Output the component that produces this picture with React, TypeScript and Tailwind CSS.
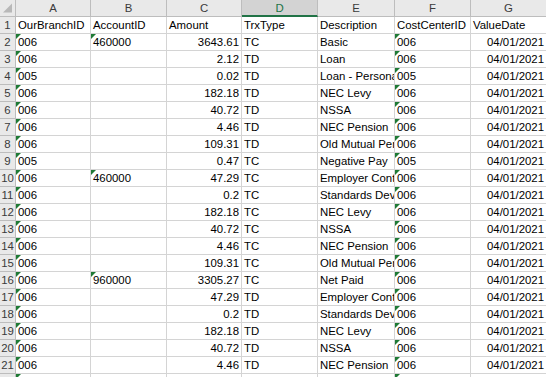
const cols = ["A", "B", "C", "D", "E", "F", "G"];

const header = ["OurBranchID", "AccountID", "Amount", "TrxType", "Description", "CostCenterID", "ValueDate"];

const rows: [string, string, string, string, string, string][] = [
  ["006", "460000", "3643.61", "TC", "Basic", "006"],
  ["006", "", "2.12", "TD", "Loan", "006"],
  ["005", "", "0.02", "TD", "Loan - Personal", "005"],
  ["006", "", "182.18", "TD", "NEC Levy", "006"],
  ["006", "", "40.72", "TD", "NSSA", "006"],
  ["006", "", "4.46", "TD", "NEC Pension", "006"],
  ["006", "", "109.31", "TD", "Old Mutual Pension", "006"],
  ["005", "", "0.47", "TC", "Negative Pay", "005"],
  ["006", "460000", "47.29", "TC", "Employer Contribution", "006"],
  ["006", "", "0.2", "TC", "Standards Development", "006"],
  ["006", "", "182.18", "TC", "NEC Levy", "006"],
  ["006", "", "40.72", "TC", "NSSA", "006"],
  ["006", "", "4.46", "TC", "NEC Pension", "006"],
  ["006", "", "109.31", "TC", "Old Mutual Pension", "006"],
  ["006", "960000", "3305.27", "TC", "Net Paid", "006"],
  ["006", "", "47.29", "TD", "Employer Contribution", "006"],
  ["006", "", "0.2", "TD", "Standards Development", "006"],
  ["006", "", "182.18", "TD", "NEC Levy", "006"],
  ["006", "", "40.72", "TD", "NSSA", "006"],
  ["006", "", "4.46", "TD", "NEC Pension", "006"],
];

const grid = "grid grid-cols-[16px_75px_76px_75px_76px_77px_76px_76px]";
const cell = "relative h-[17px] border-r border-b border-[#d4d4d4] overflow-hidden whitespace-nowrap px-[2px] leading-[16px] text-black";

// green "number stored as text" marker
const Flag = () => (
  <span className="absolute left-0 top-0 w-0 h-0 border-t-[5px] border-r-[5px] border-t-[#1f7a35] border-r-transparent" />
);

const RowHead = ({ n }: { n: number | string }) => (
  <div className="h-[17px] bg-[#e9e9e9] border-r border-b border-[#bdbdbd] text-[#3b3b3b] leading-[16px] text-center overflow-hidden">
    {n}
  </div>
);

export default function App() {
  return (
    <div className="w-[546px] h-[377px] overflow-hidden bg-white text-[11.4px] font-['Liberation_Sans',Arial,sans-serif]">
      <div className={grid}>
        <div className="h-[17px] bg-[#e9e9e9] border-r border-b border-[#bdbdbd] flex items-end justify-end p-[3px]">
          <svg width="10" height="10" viewBox="0 0 10 10">
            <polygon points="10,0 10,10 0,10" fill="#b8b8b8" />
          </svg>
        </div>
        {cols.map((c) =>
          c === "D" ? (
            <div key={c} className="h-[17px] bg-[#d3d3d3] border-r border-[#bdbdbd] border-b-2 border-b-[#217346] text-[#217346] text-center leading-[16px]">
              {c}
            </div>
          ) : (
            <div key={c} className="h-[17px] bg-[#e9e9e9] border-r border-b border-[#bdbdbd] text-[#3b3b3b] text-center leading-[16px]">
              {c}
            </div>
          )
        )}

        <RowHead n={1} />
        {header.map((h) => (
          <div key={h} className={cell}>
            {h}
          </div>
        ))}

        {rows.map((r, i) => (
          <div key={i} className="contents">
            <RowHead n={i + 2} />
            <div className={cell}>
              <Flag />
              {r[0]}
            </div>
            <div className={cell}>
              {r[1] && <Flag />}
              {r[1]}
            </div>
            <div className={`${cell} text-right`}>{r[2]}</div>
            <div className={cell}>{r[3]}</div>
            <div className={cell}>{r[4]}</div>
            <div className={cell}>
              <Flag />
              {r[5]}
            </div>
            <div className={`${cell} text-right`}>04/01/2021</div>
          </div>
        ))}

        <RowHead n={22} />
        <div className={cell}>
          <Flag />
        </div>
        <div className={cell} />
        <div className={cell} />
        <div className={cell} />
        <div className={cell} />
        <div className={cell}>
          <Flag />
        </div>
        <div className={cell} />
      </div>
    </div>
  );
}
